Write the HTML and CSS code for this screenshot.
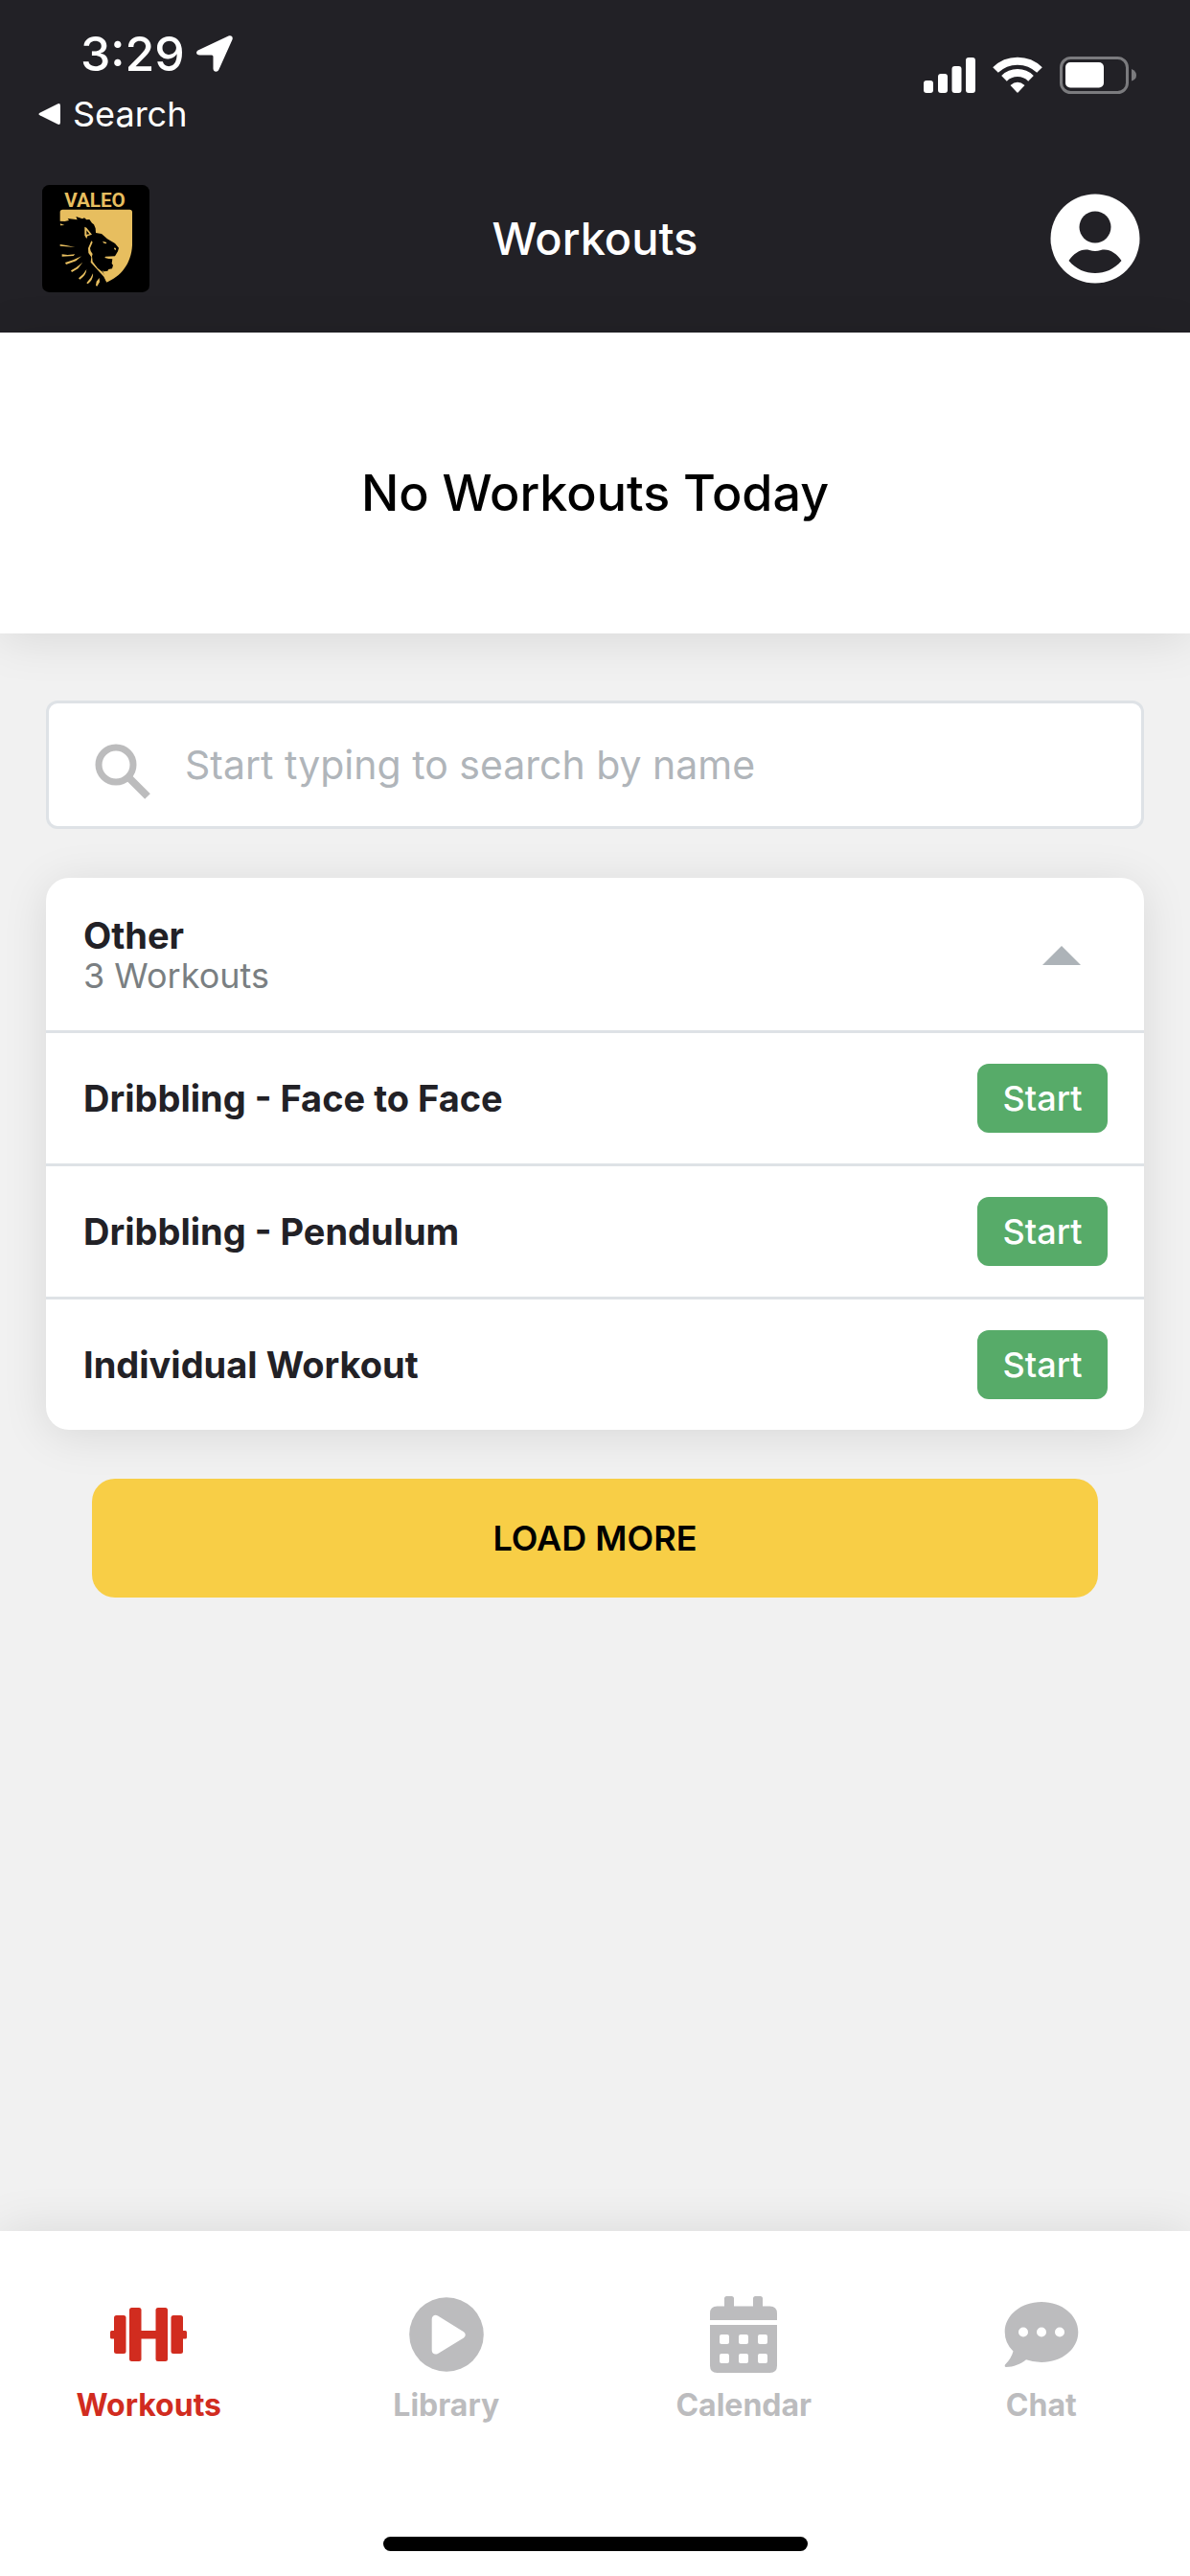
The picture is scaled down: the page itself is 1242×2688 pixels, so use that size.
FILE: index.html
```html
<!DOCTYPE html>
<html lang="en">
<head>
<meta charset="utf-8">
<meta name="viewport" content="width=device-width, initial-scale=1">
<title>Workouts</title>
<link rel="stylesheet" href="styles.css">
</head>
<body>
<header class="header">
  <div class="status">
    <div class="status-left">
      <div class="clock">
        <span>3:29</span>
        <svg width="38" height="38" viewBox="0 0 38 38" aria-hidden="true"><path fill="#fff" d="M2.200 15.300L33.500.600C36.500-.500 38.600 1.500 37.400 4.600L23.500 35.500C22 38.800 17.700 38.400 17.500 34.500V22Q17.500 20.500 16 20.500H3.500C-.600 20.500-1 16.800 2.200 15.300Z"/></svg>
      </div>
      <a class="back" href="#">
        <svg width="24" height="24" viewBox="0 0 24 24" aria-hidden="true"><path fill="#fff" d="M1.500 10.700L20 1.400Q23 .300 23 3.300V20.700Q23 23.700 20 22.600L1.500 13.300Q-.600 12 1.500 10.700Z"/></svg>
        <span>Search</span>
      </a>
    </div>
    <div class="status-right">
      <svg width="54" height="40" viewBox="0 0 54 40" aria-hidden="true" fill="#fff"><rect x="0" y="26" width="10" height="13" rx="3"/><rect x="15" y="19" width="10" height="20" rx="3"/><rect x="29.500" y="11" width="10" height="28" rx="3"/><rect x="44" y="2" width="10" height="37" rx="3"/></svg>
      <svg width="52" height="40" viewBox="0 0 52 40" aria-hidden="true"><g fill="none" stroke="#fff" stroke-width="8"><path d="M3 15A33 33 0 0 1 49 15"/><path d="M12 23.800A20 20 0 0 1 40 23.800"/></g><path fill="#fff" d="M18.500 31Q26 24.500 33.500 31L27 38Q26 39.500 25 38Z"/></svg>
      <svg width="80" height="40" viewBox="0 0 80 40" aria-hidden="true"><rect x="1.500" y="2.500" width="69" height="36" rx="10" fill="none" stroke="#7b7b7e" stroke-width="3"/><rect x="6" y="7" width="40" height="26.500" rx="5" fill="#fff"/><path fill="#7b7b7e" d="M75 14Q80 16 80 20.500T75 26.500Z"/></svg>
    </div>
  </div>
  <div class="titlebar">
    <svg class="logo" viewBox="42 39 336 336" role="img" aria-label="Valeo">
      <rect x="42" y="39" width="336" height="336" rx="22" fill="#000"/>
      <text class="logo-text" x="207" y="107" text-anchor="middle">VALEO</text>
      <path fill="#e7be5f" d="M98 152V124Q98 116 106 116H316Q324 116 324 124V228C321 286 288 326 243 344L228 318Z"/>
      <path fill="#000" d="M92 152L113 153L126 150L122 144L152 148L148 138L168 145L174 142L181 148L190 147L198 158L204 163L209 175L210 189L228 192L246 208L270 222L282 236L279 247L270 262L240 263L238 267L250 270L262 271L260 285L264 290L261 301L250 303L247 308L235 310L231 306L244 344L236 360L90 365Z"/>
      <path fill="#e7be5f" d="M175 170L181 173L198 194L184 199L181 207L175 197ZM181 181L181 194L190 193Z" fill-rule="evenodd"/>
      <path fill="#e7be5f" d="M196 214L200 218L192 237L194 246L200 255L198 262L200 279L216 300L231 311L243 330L244 344L235 326L209 298L194 281L196 265L187 252L186 237Z"/>
      <path fill="#e7be5f" d="M231 215L244 219L242 223L235 221ZM269 235L273 238L272 244L267 239ZM99 160L112 165L99 166ZM98 225L118 228L145 234L98 230ZM104 256L122 258L145 256L140 261L104 263ZM114 282L139 274L165 262L148 277L117 288ZM132 307L148 298L169 281L154 301L135 312ZM156 331Q174 317 181 303Q180 322 160 335ZM181 346Q195 332 201 316Q203 335 185 349ZM210 354L212 341L221 330L222 343L214 356Z"/>
    </svg>
    <h1 class="title">Workouts</h1>
    <button class="profile" type="button" aria-label="Profile">
      <svg width="94" height="94" viewBox="0 0 94 94" aria-hidden="true"><circle cx="47" cy="47" r="46.500" fill="#fff"/><circle cx="47" cy="35" r="16.500" fill="#222126"/><path fill="#222126" d="M19.500 70C25 62 33 57 41 59Q47 61 53 59C61 57 69 62 74.500 70C67 79 57 83 47 83S27 79 19.500 70Z"/></svg>
    </button>
  </div>
</header>
<section class="today"><h2 class="today-text">No Workouts Today</h2></section>
<main class="content">
  <label class="search">
    <svg class="search-icon" width="58" height="58" viewBox="0 0 58 58" aria-hidden="true"><circle cx="22" cy="22" r="18" fill="none" stroke="#bcbcbd" stroke-width="7"/><path d="M35 35L55 55" stroke="#bcbcbd" stroke-width="8"/></svg>
    <input class="search-input" type="search" aria-label="Search by name" placeholder="Start typing to search by name">
  </label>
  <section class="card">
    <button class="group" type="button" aria-expanded="true">
      <span class="group-text"><span class="group-name">Other</span><span class="group-count">3 Workouts</span></span>
      <svg width="40" height="20" viewBox="0 0 40 20" aria-hidden="true"><path fill="#adb3b8" d="M0 20L20 0L40 20Z"/></svg>
    </button>
    <ul class="list">
      <li class="row"><span>Dribbling - Face to Face</span><button class="start" type="button">Start</button></li>
      <li class="row"><span>Dribbling - Pendulum</span><button class="start" type="button">Start</button></li>
      <li class="row"><span>Individual Workout</span><button class="start" type="button">Start</button></li>
    </ul>
  </section>
  <button class="load" type="button">LOAD MORE</button>
</main>
<footer class="footer">
  <nav class="tabs">
    <a class="tab tab-active" href="#" aria-current="page">
      <svg width="80" height="80" viewBox="0 0 80 80" fill="currentColor" aria-hidden="true"><rect x="0" y="36" width="10" height="8.500" rx="1.500"/><rect x="70" y="36" width="10" height="8.500" rx="1.500"/><rect x="4" y="20" width="12.500" height="40" rx="2.500"/><rect x="63.500" y="20" width="12.500" height="40" rx="2.500"/><rect x="20" y="12" width="12.500" height="56" rx="2.500"/><rect x="47.500" y="12" width="12.500" height="56" rx="2.500"/><rect x="32" y="36" width="16" height="8.500"/></svg>
      <span>Workouts</span>
    </a>
    <a class="tab" href="#">
      <svg width="80" height="80" viewBox="0 0 80 80" aria-hidden="true"><circle cx="40" cy="40" r="38.800" fill="currentColor"/><path fill="#fff" d="M24.700 24C24.700 20.500 28 18.600 31 20.500L58 37.200Q61.500 40.200 58 43.500L31 60C28 61.500 24.700 60 24.700 56.500Z"/></svg>
      <span>Library</span>
    </a>
    <a class="tab" href="#">
      <svg width="80" height="80" viewBox="0 0 80 80" aria-hidden="true"><path fill="currentColor" d="M5 25V18Q5 10.500 12.500 10.500H20V2.500Q20 0 22.500 0H27.500Q30 0 30 2.500V10.500H50V2.500Q50 0 52.500 0H57.500Q60 0 60 2.500V10.500H67.500Q75 10.500 75 18V25ZM5 30H75V72.500Q75 80 67.500 80H12.500Q5 80 5 72.500Z"/><g fill="#fff"><rect x="15" y="40" width="10" height="10" rx="2"/><rect x="35" y="40" width="10" height="10" rx="2"/><rect x="55" y="40" width="10" height="10" rx="2"/><rect x="15" y="60" width="10" height="10" rx="2"/><rect x="35" y="60" width="10" height="10" rx="2"/><rect x="55" y="60" width="10" height="10" rx="2"/></g></svg>
      <span>Calendar</span>
    </a>
    <a class="tab" href="#">
      <svg width="80" height="80" viewBox="0 0 80 80" aria-hidden="true"><path fill="currentColor" d="M40 6C61.500 6 78.300 20 78.300 37.500S61.500 69 40 69Q31.500 69 24 66.300C18 71 11 74 3 74Q1 73.500 2 71.500Q8.500 65 10.500 57.500Q1.700 49 1.700 37.500C1.700 20 18.500 6 40 6Z"/><g fill="#fff"><circle cx="21" cy="37.500" r="5"/><circle cx="40" cy="37.500" r="5"/><circle cx="59" cy="37.500" r="5"/></g></svg>
      <span>Chat</span>
    </a>
  </nav>
  <div class="home-bar"></div>
</footer>
</body>
</html>
```
FILE: styles.css
```css
* { box-sizing: border-box; }

body {
  margin: 0;
  min-height: 100vh;
  display: flex;
  flex-direction: column;
  background: #f1f1f1;
  color: #222126;
  font-family: Inter, "Liberation Sans", sans-serif;
}

button {
  border: 0;
  padding: 0;
  background: none;
  font: inherit;
  color: inherit;
  cursor: pointer;
}

a { color: inherit; text-decoration: none; }
svg { display: block; flex: none; }

/* Header */
.header {
  padding: 26px 44px 42px;
  background: #222126;
  color: #fff;
}

.status {
  display: flex;
  justify-content: space-between;
}

.status-left {
  display: flex;
  flex-direction: column;
  gap: 12px;
}

.clock {
  display: flex;
  align-items: center;
  gap: 12px;
  padding-left: 40px;
  font-size: 50px;
  font-weight: 500;
  line-height: 60px;
}

.back {
  display: flex;
  align-items: center;
  gap: 12px;
  margin-left: -4px;
  font-size: 36px;
  line-height: 42px;
}

.status-right {
  display: flex;
  gap: 18px;
  height: 40px;
  margin: 32px 12px 0 0;
}

.titlebar {
  display: grid;
  grid-template-columns: 1fr auto 1fr;
  align-items: center;
  margin-top: 53px;
}

.logo { width: 112px; height: 112px; }

.logo-text {
  fill: #e7be5f;
  font-family: Roboto, sans-serif;
  font-size: 62px;
  font-weight: 700;
}

.title {
  margin: 0;
  font-size: 47px;
  font-weight: 500;
  line-height: 60px;
}

.profile {
  justify-self: end;
  margin-right: 8px;
}

/* Today banner */
.today {
  padding: 136px 48px 114px;
  background: #fff;
  text-align: center;
  box-shadow: 0 6px 48px rgba(0, 0, 0, .1);
}

.today-text {
  margin: 0;
  color: #000;
  font-size: 52px;
  font-weight: 500;
  line-height: 64px;
}

/* Content */
.content {
  flex: 1;
  display: flex;
  flex-direction: column;
  gap: 51px;
  padding: 70px 48px;
}

.search {
  display: flex;
  align-items: center;
  gap: 36px;
  height: 134px;
  padding: 0 48px;
  background: #fff;
  border: 3px solid #dee2e6;
  border-radius: 12px;
}

.search-icon { margin-top: 14px; }

.search-input {
  flex: 1;
  min-width: 0;
  border: 0;
  padding: 0;
  outline: 0;
  background: none;
  font: inherit;
  font-size: 41px;
  line-height: 60px;
}

.search-input::placeholder { color: #b0b5ba; opacity: 1; }

.card {
  background: #fff;
  border-radius: 24px;
  box-shadow: 0 6px 48px rgba(0, 0, 0, .1);
}

.group {
  display: flex;
  align-items: center;
  justify-content: space-between;
  width: 100%;
  padding: 39px 66px 36px 39px;
  text-align: left;
}

.group-text { display: flex; flex-direction: column; }

.group-name {
  font-size: 38px;
  font-weight: 700;
  line-height: 42px;
}

.group-count {
  color: #7a7f82;
  font-size: 36px;
  line-height: 42px;
}

.list { margin: 0; padding: 0; list-style: none; }

.row {
  display: flex;
  align-items: center;
  justify-content: space-between;
  padding: 32px 38px 32px 39px;
  border-top: 3px solid #dee2e6;
  font-size: 38px;
  font-weight: 700;
  line-height: 42px;
}

.start {
  width: 136px;
  height: 72px;
  border-radius: 12px;
  background: #57ab69;
  color: #fff;
  font-size: 36px;
  font-weight: 500;
}

.load {
  height: 124px;
  margin: 0 48px;
  border-radius: 24px;
  background: #f8ce46;
  color: #000;
  font-size: 36px;
  font-weight: 600;
}

/* Bottom navigation */
.footer {
  padding: 68px 0 26px;
  background: #fff;
  box-shadow: 0 0 48px rgba(0, 0, 0, .1);
}

.tabs {
  display: grid;
  grid-template-columns: repeat(4, 1fr);
}

.tab {
  display: flex;
  flex-direction: column;
  align-items: center;
  gap: 14px;
  color: #bcbcbe;
  font-size: 32px;
  font-weight: 700;
  line-height: 40px;
}

.tab-active { color: #d12c1f; }

.home-bar {
  width: 443px;
  height: 15px;
  margin: 117px auto 0;
  border-radius: 8px;
  background: #000;
}
```
